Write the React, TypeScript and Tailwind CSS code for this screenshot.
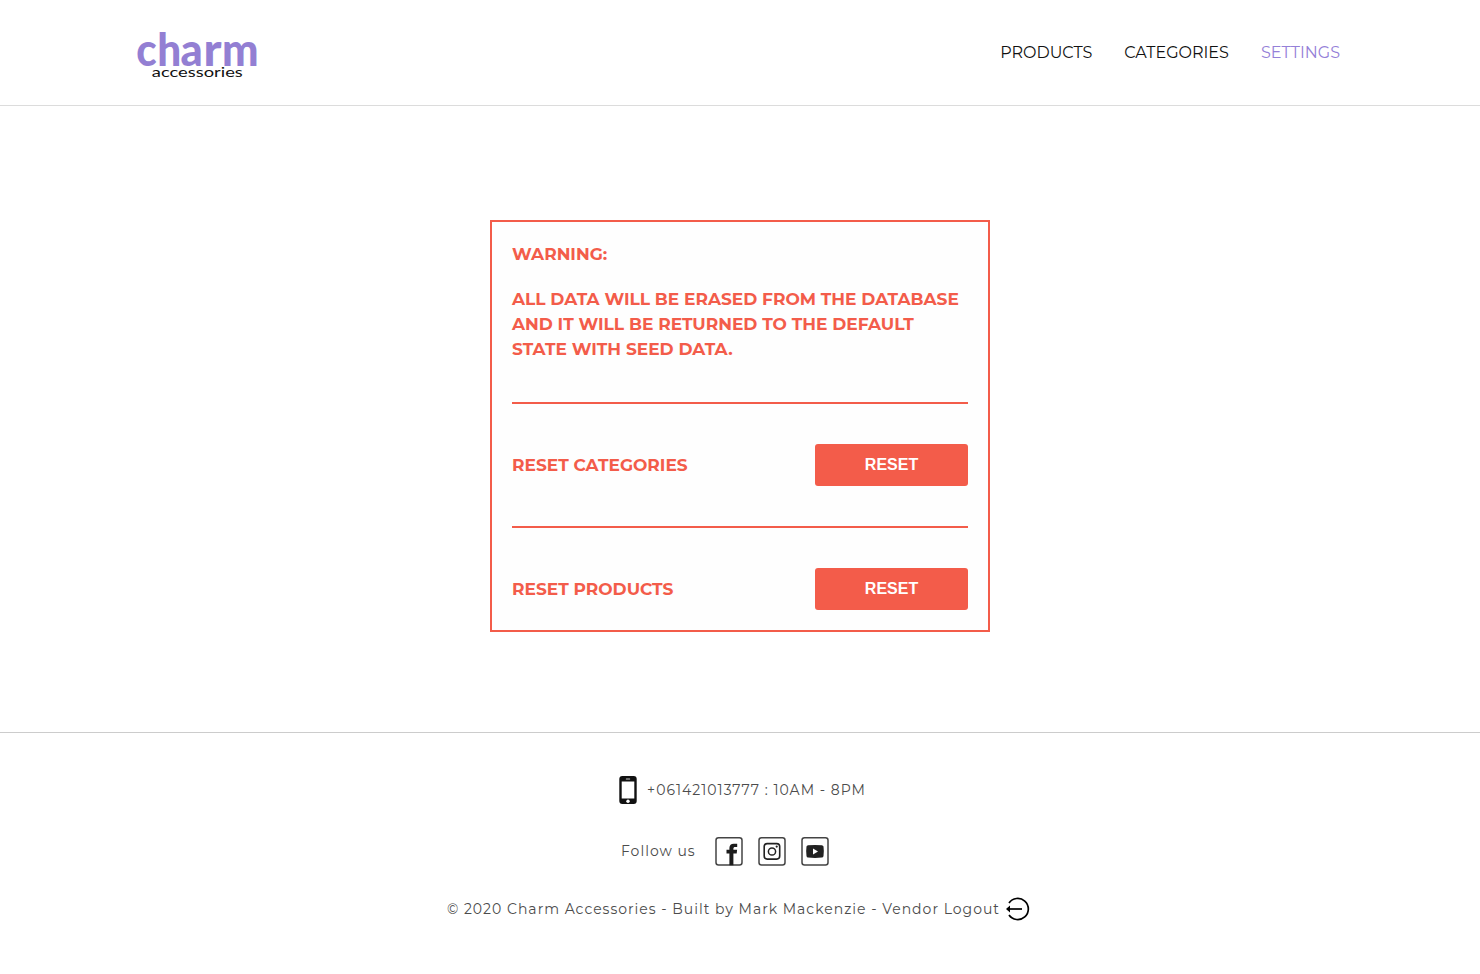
import type { ReactNode } from "react";

const navItems = [
  { label: "PRODUCTS", active: false },
  { label: "CATEGORIES", active: false },
  { label: "SETTINGS", active: true },
];

function Logo() {
  return (
    <svg width="130" height="90" viewBox="0 0 130 90" role="img" aria-label="charm accessories">
      <text y="58" className="fill-[#937fd3] font-['Lato','Inter',sans-serif] text-[45px] font-black">
        <tspan x="2.3" textLength="20.4" lengthAdjust="spacingAndGlyphs">c</tspan>
        <tspan x="23.2" textLength="24" lengthAdjust="spacingAndGlyphs">h</tspan>
        <tspan x="46.6" textLength="22.2" lengthAdjust="spacingAndGlyphs">a</tspan>
        <tspan x="69.5" textLength="18" lengthAdjust="spacingAndGlyphs">r</tspan>
        <tspan x="88" textLength="36.6" lengthAdjust="spacingAndGlyphs">m</tspan>
      </text>
      <text x="17.8" y="69" textLength="91" lengthAdjust="spacingAndGlyphs" className="fill-[#111] font-['Lato','Inter',sans-serif] text-[12.5px]">accessories</text>
    </svg>
  );
}

function Header() {
  return (
    <header className="h-[106px] border-b border-[#dcdcdc]">
      <div className="mx-auto flex h-[105px] w-[1212px] items-center justify-between pr-1.5">
        <Logo />
        <nav className="flex gap-8 text-base leading-6">
          {navItems.map((item) => (
            <a key={item.label} className={item.active ? "text-[#9580d8]" : "text-[#111]"}>{item.label}</a>
          ))}
        </nav>
      </div>
    </header>
  );
}

function ResetRow({ label }: { label: string }) {
  return (
    <div className="mt-10 flex items-center justify-between border-t-2 border-[#f35c4a] pt-10">
      <span>{label}</span>
      <button className="h-[42px] w-[153px] rounded-[3px] bg-[#f35c4a] font-['Liberation_Sans',Arial,sans-serif] text-base font-bold text-white">RESET</button>
    </div>
  );
}

function PhoneIcon() {
  return (
    <svg width="18" height="28" viewBox="0 0 18 28">
      <rect x=".3" width="17.4" height="28" rx="3" fill="#111" />
      <rect x="2.7" y="5.5" width="12.6" height="17" fill="#fff" />
      <rect x="6.8" y="2.6" width="4.4" height="1" rx=".5" fill="#ccc" />
      <circle cx="9" cy="25.2" r="1.7" fill="#fff" />
    </svg>
  );
}

function SocialFrame({ children }: { children: ReactNode }) {
  return (
    <svg width="28" height="30" viewBox="0 -0.6 28 30" fill="none">
      <rect x="1" y="1.2" width="26" height="27.2" rx="2.5" stroke="#444" strokeWidth="1.5" />
      {children}
    </svg>
  );
}

function Footer() {
  return (
    <footer className="flex h-[242px] flex-col items-center border-t border-[#ccc] text-sm leading-6 tracking-[1px] text-[#4c4c4c]">
      <div className="mt-[43px] flex h-7 items-center gap-2.5 pl-[5px]">
        <PhoneIcon />
        <span>+061421013777 : 10AM - 8PM</span>
      </div>
      <div className="mt-[32px] flex h-[30px] w-[238px] items-center">
        <span className="w-[94px]">Follow us</span>
        <div className="flex gap-[15px]">
          <SocialFrame>
            <path d="M14.4 28.6V16.8H11.5v-3.6h2.9v-1.7c0-3 1.7-4.4 4.3-4.4h3.5v3.3h-2c-1.2 0-1.8.5-1.8 1.6v1.2h3.7l-.4 3.6h-3.3v11.8z" fill="#1c1c1c" />
          </SocialFrame>
          <SocialFrame>
            <rect x="6.2" y="7" width="15.5" height="15.5" rx="3" stroke="#222" strokeWidth="1.6" />
            <circle cx="14" cy="14.9" r="3.6" stroke="#222" strokeWidth="1.5" />
            <circle cx="18.7" cy="10" r="1.1" fill="#222" />
          </SocialFrame>
          <SocialFrame>
            <path d="M5.5 10Q5.7 8.7 7.1 8.6Q14 8 20.8 8.6Q22.3 8.7 22.5 10Q23.2 15 22.5 19.3Q22.3 20.8 20.8 21Q14 21.7 7.1 21Q5.7 20.8 5.5 19.3Q4.8 15 5.5 10Z" fill="#222" />
            <path d="M12 11.8v6l5-3z" fill="#fff" />
          </SocialFrame>
        </div>
      </div>
      <div className="mt-[31px] flex h-6 items-center gap-[5px] pr-0.5">
        <span>© 2020 Charm Accessories - Built by Mark Mackenzie - Vendor Logout</span>
        <svg width="26" height="26" viewBox="0 0 26 26" fill="none" stroke="#000" strokeWidth="1.7">
          <path d="M4 7A10.6 10.6 0 1 1 4 19" />
          <path d="M3 13h14" />
          <path d="M1 13l4-3.4v6.8z" fill="#000" stroke="none" />
        </svg>
      </div>
    </footer>
  );
}

export default function App() {
  return (
    <div className="min-h-[974px] bg-white font-['Montserrat','Inter',sans-serif]">
      <Header />
      <main className="flex justify-center pt-[114px] pb-[100px]">
        <section className="w-[500px] border-2 border-[#f35c4a] bg-[#fefefe] p-5 text-[17px] leading-[25px] font-bold text-[#f35c4a]">
          <p>WARNING:</p>
          <p className="mt-5">ALL DATA WILL BE ERASED FROM THE DATABASE AND IT WILL BE RETURNED TO THE DEFAULT STATE WITH SEED DATA.</p>
          <ResetRow label="RESET CATEGORIES" />
          <ResetRow label="RESET PRODUCTS" />
        </section>
      </main>
      <Footer />
    </div>
  );
}
